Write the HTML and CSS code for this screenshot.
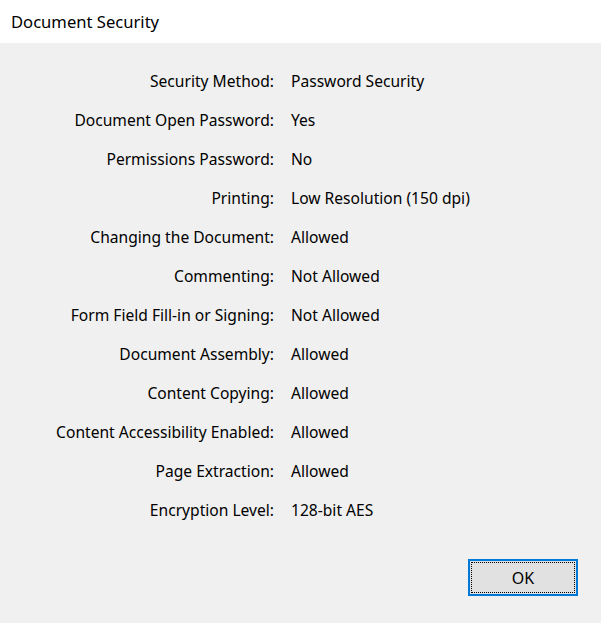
FILE: index.html
```html
<!DOCTYPE html>
<html lang="en">
<head>
	<meta charset="UTF-8">
	<title>Document Security</title>
	<link rel="stylesheet" href="styles.css">
</head>
<body>
	<div class="dialog">
		<div class="dialog-title">Document Security</div>
		<div class="dialog-body">
			<dl class="props">
				<dt>Security Method:</dt><dd>Password Security</dd>
				<dt>Document Open Password:</dt><dd>Yes</dd>
				<dt>Permissions Password:</dt><dd>No</dd>
				<dt>Printing:</dt><dd>Low Resolution (150 dpi)</dd>
				<dt>Changing the Document:</dt><dd>Allowed</dd>
				<dt>Commenting:</dt><dd>Not Allowed</dd>
				<dt>Form Field Fill-in or Signing:</dt><dd>Not Allowed</dd>
				<dt>Document Assembly:</dt><dd>Allowed</dd>
				<dt>Content Copying:</dt><dd>Allowed</dd>
				<dt>Content Accessibility Enabled:</dt><dd>Allowed</dd>
				<dt>Page Extraction:</dt><dd>Allowed</dd>
				<dt>Encryption Level:</dt><dd>128-bit AES</dd>
			</dl>
			<div class="dialog-buttons">
				<button class="btn btn-default">OK</button>
			</div>
		</div>
	</div>
</body>
</html>
```

FILE: styles.css
```css
* {
	margin: 0;
	padding: 0;
}
html, body {
	height: 100%;
}
body {
	font-family: "Noto Sans", "Open Sans", sans-serif;
	color: #000;
	background: #f0f0f0;
}
.dialog {
	display: flex;
	flex-direction: column;
	height: 100%;
}
.dialog-title {
	height: 43px;
	line-height: 44px;
	padding-left: 11px;
	font-size: 16.6px;
	background: #fff;
}
.dialog-body {
	flex: 1;
	display: flex;
	flex-direction: column;
	padding-top: 19px;
}
/* label / value rows */
.props {
	display: grid;
	grid-template-columns: 274px 1fr;
	grid-auto-rows: 39px;
	column-gap: 17px;
	font-size: 15.6px;
	line-height: 39px;
}
.props dt {
	text-align: right;
}
.props dd {
	white-space: nowrap;
}
.dialog-buttons {
	display: flex;
	justify-content: flex-end;
	padding: 29px 23px 0 0;
}
.btn {
	width: 110px;
	height: 37px;
	font-family: inherit;
	font-size: 16px;
	color: #000;
	background: #e1e1e1;
	border: 2px solid #0078d7;
	outline: 1px dotted #000;
	outline-offset: -4px;
}
```
